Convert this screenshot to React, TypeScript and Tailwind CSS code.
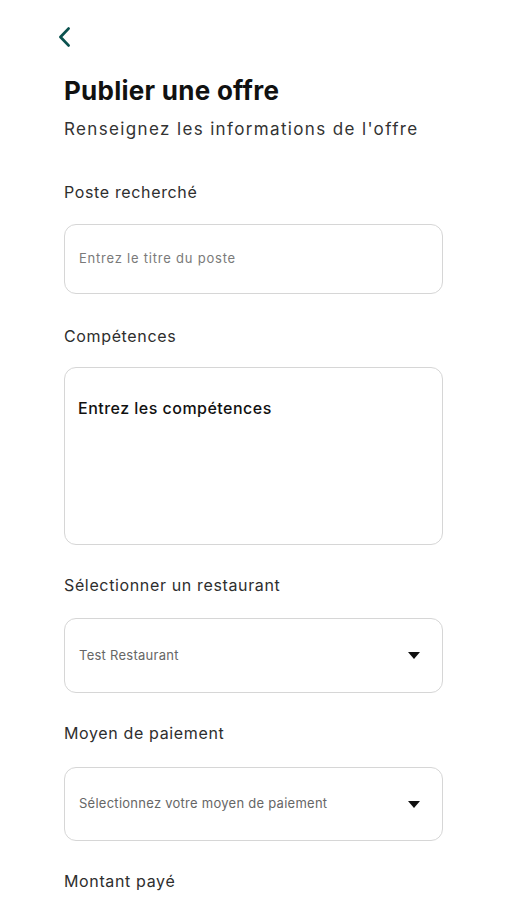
import React from "react";

function Label({ children, className = "" }: { children: React.ReactNode; className?: string }) {
  return (
    <div className={"text-[16px] leading-[20px] text-[#2e2e2e] tracking-[0.04em] " + className}>
      {children}
    </div>
  );
}

function Caret() {
  return (
    <svg width="12" height="7" viewBox="0 0 12 7" className="shrink-0">
      <path d="M0 0 H12 L6 7 Z" fill="#111" />
    </svg>
  );
}

export default function App() {
  return (
    <div
      className="min-h-screen bg-white px-16 pb-8"
      style={{ fontFamily: "Inter, 'Noto Sans', sans-serif" }}
    >
      <div className="pt-[27px] -ml-[6px]">
        <svg width="13" height="20" viewBox="0 0 13 20">
          <path
            d="M10.5 1.6 L2.5 10 L10.5 18.4"
            fill="none"
            stroke="#0b524f"
            strokeWidth="2.8"
            strokeLinecap="round"
            strokeLinejoin="round"
          />
        </svg>
      </div>

      <h1 className="mt-[29px] text-[26px] leading-[30px] font-bold text-[#111] tracking-[0.01em]">
        Publier une offre
      </h1>
      <p className="mt-[11px] text-[17px] leading-[24px] text-[#333] tracking-[0.08em]">
        Renseignez les informations de l'offre
      </p>

      <Label className="mt-[41px]">Poste recherché</Label>
      <div className="mt-[22px] h-[70px] rounded-[12px] border border-[#d6d6d6] flex items-center px-[14px]">
        <span className="text-[13px] text-[#7a7a7a] tracking-[0.06em]">Entrez le titre du poste</span>
      </div>

      <Label className="mt-[32px]">Compétences</Label>
      <div className="mt-[21px] h-[178px] rounded-[12px] border border-[#d6d6d6] px-[13px] pt-[28px]">
        <span className="text-[16px] leading-[20px] font-medium text-[#111] tracking-[0.03em]">
          Entrez les compétences
        </span>
      </div>

      <Label className="mt-[30px]">Sélectionner un restaurant</Label>
      <div className="mt-[23px] h-[75px] rounded-[12px] border border-[#d6d6d6] flex items-center justify-between pl-[14px] pr-[22px]">
        <span className="text-[13px] text-[#666] tracking-[0.02em]">Test Restaurant</span>
        <Caret />
      </div>

      <Label className="mt-[30px]">Moyen de paiement</Label>
      <div className="mt-[24px] h-[74px] rounded-[12px] border border-[#d6d6d6] flex items-center justify-between pl-[14px] pr-[22px]">
        <span className="text-[13px] text-[#666] tracking-[0.02em]">Sélectionnez votre moyen de paiement</span>
        <Caret />
      </div>

      <Label className="mt-[30px]">Montant payé</Label>
    </div>
  );
}
